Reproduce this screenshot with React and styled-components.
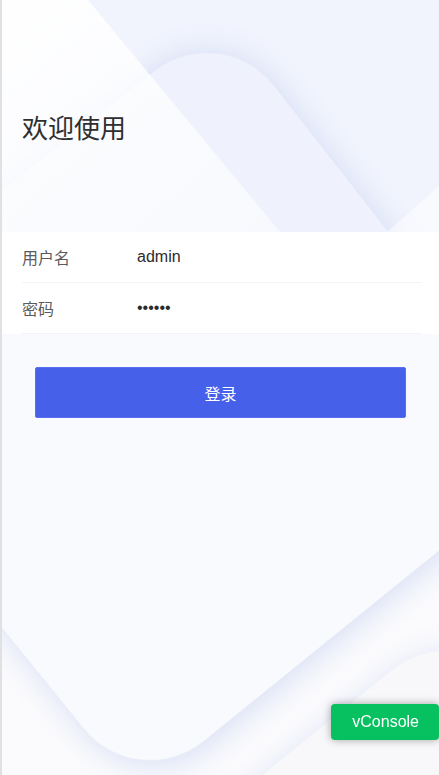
import React from 'react';
import styled, { createGlobalStyle } from 'styled-components';

const GlobalStyle = createGlobalStyle`
  html, body {
    margin: 0;
    padding: 0;
    height: 100%;
  }
  body {
    font-family: "Liberation Sans", "Noto Sans CJK SC", sans-serif;
    background: #f9fafd;
  }
  #root {
    min-height: 100%;
  }
`;

const Page = styled.div`
  position: relative;
  min-height: 100vh;
  box-sizing: border-box;
  border-left: 2px solid #e1e1e3;
  background: #f9fafd;
  overflow: hidden;
`;

const Backdrop = styled.svg`
  position: absolute;
  top: 0;
  left: 0;
  width: 100%;
  height: 100%;
  z-index: 0;
`;

const Header = styled.header`
  position: relative;
  height: 232px;
  box-sizing: border-box;
  padding: 111px 20px 0;
  overflow: hidden;
  z-index: 1;
`;

const Title = styled.h1`
  position: relative;
  margin: 0;
  font-size: 26px;
  line-height: 36px;
  font-weight: 400;
  color: #2f2f30;
`;

const Form = styled.form`
  position: relative;
  z-index: 1;
  background: #fff;
`;

const Row = styled.label`
  display: block;
  padding-left: 20px;
`;

const Cell = styled.div`
  display: flex;
  align-items: center;
  height: 50px;
  margin-right: 17px;
  border-bottom: 1px solid #f3f4f7;
`;

const Label = styled.span`
  width: 115px;
  flex-shrink: 0;
  font-size: 16px;
  color: #5a5b5d;
`;

const Field = styled.input`
  flex: 1;
  min-width: 0;
  border: 0;
  outline: none;
  padding: 0;
  background: transparent;
  font-family: "Liberation Sans", "Noto Sans CJK SC", sans-serif;
  font-size: 16px;
  color: #2b2b2c;
`;

const Actions = styled.div`
  position: relative;
  z-index: 1;
  padding: 33px 33px 0;
`;

const SubmitButton = styled.button`
  display: block;
  width: 100%;
  height: 51px;
  border: 1px solid #5a6ff0;
  border-radius: 2px;
  background: #4760ea;
  color: #fff;
  font-family: "Liberation Sans", "Noto Sans CJK SC", sans-serif;
  font-size: 16px;
  cursor: pointer;
`;

const ConsoleSwitch = styled.div`
  position: fixed;
  right: 0;
  bottom: 35px;
  z-index: 10;
  height: 36px;
  padding: 0 20px 0 21px;
  display: flex;
  align-items: center;
  border-radius: 4px;
  background: #07c160;
  color: #fff;
  font-size: 16px;
  box-shadow: 0 0 8px rgba(0, 0, 0, 0.35);
`;

const HeaderArt = () => (
  <Backdrop viewBox="2 0 437 232" preserveAspectRatio="none">
    <defs>
      <filter id="topShade" x="-20%" y="-20%" width="140%" height="140%">
        <feDropShadow dx="0" dy="0" stdDeviation="16" floodColor="#cdd7f3" floodOpacity="0.85" />
      </filter>
      <linearGradient id="veil" x1="0" y1="0" x2="1" y2="1">
        <stop offset="0" stopColor="#fff" stopOpacity="0.97" />
        <stop offset="0.6" stopColor="#fff" stopOpacity="0.7" />
        <stop offset="1" stopColor="#fff" stopOpacity="0.55" />
      </linearGradient>
    </defs>
    <rect x="0" y="0" width="440" height="232" fill="#f1f4fd" />
    <rect width="800" height="800" rx="85" transform="translate(221.6 18.7) rotate(52)" fill="#eff2fc" filter="url(#topShade)" />
    <polygon points="0,0 88,0 280,232 0,232" fill="url(#veil)" />
    <polygon points="440,185 440,232 387,232" fill="#fff" fillOpacity="0.5" />
  </Backdrop>
);

const PageArt = () => (
  <Backdrop viewBox="2 0 437 775" preserveAspectRatio="none">
    <defs>
      <filter id="lowShade" x="-20%" y="-20%" width="140%" height="140%">
        <feDropShadow dx="0" dy="6" stdDeviation="16" floodColor="#d3dbf3" floodOpacity="0.9" />
      </filter>
    </defs>
    <rect x="0" y="0" width="440" height="775" fill="#fbfbfd" />
    <rect width="800" height="800" rx="85" transform="translate(-366 173) rotate(-39)" fill="#f9fafd" filter="url(#lowShade)" />
    <rect width="600" height="600" rx="85" transform="translate(-8 994) rotate(-39)" fill="#f8f8fb" filter="url(#lowShade)" />
  </Backdrop>
);

const App = () => {
  return (
    <Page>
      <GlobalStyle />
      <PageArt />
      <Header>
        <HeaderArt />
        <Title>欢迎使用</Title>
      </Header>
      <Form onSubmit={(e) => e.preventDefault()}>
        <Row>
          <Cell>
            <Label>用户名</Label>
            <Field type="text" defaultValue="admin" />
          </Cell>
        </Row>
        <Row>
          <Cell>
            <Label>密码</Label>
            <Field type="password" defaultValue="123456" />
          </Cell>
        </Row>
      </Form>
      <Actions>
        <SubmitButton type="button">登录</SubmitButton>
      </Actions>
      <ConsoleSwitch>vConsole</ConsoleSwitch>
    </Page>
  );
};

export default App;
